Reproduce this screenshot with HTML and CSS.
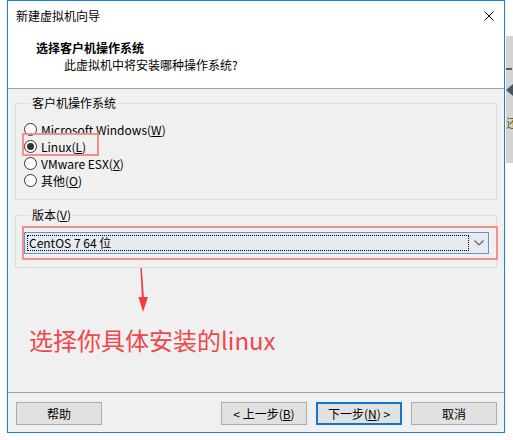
FILE: index.html
```html
<!DOCTYPE html>
<html lang="zh-CN">
<head>
<meta charset="utf-8">
<title>新建虚拟机向导</title>
<link rel="stylesheet" href="styles.css">
</head>
<body>
<div class="screen">
  <div class="gap-left"></div>
  <div class="window">
    <div class="head">
      <div class="titlebar">
        <span class="title-text">新建虚拟机向导</span>
        <svg class="close" width="10" height="10" viewBox="0 0 10 10"><path d="M0.5 0.5 L9.5 9.5 M9.5 0.5 L0.5 9.5" stroke="#000" stroke-width="1" fill="none"/></svg>
      </div>
      <div class="head-title">选择客户机操作系统</div>
      <div class="head-sub">此虚拟机中将安装哪种操作系统?</div>
    </div>
    <div class="sep"></div>
    <div class="content">
      <fieldset class="group group-os">
        <legend>客户机操作系统</legend>
        <div class="radio-row"><span class="radio"></span><span>Microsoft Windows(<u>W</u>)</span></div>
        <div class="radio-row marked"><span class="radio checked"></span><span>Linux(<u>L</u>)</span><span class="mark mark-linux"></span></div>
        <div class="radio-row"><span class="radio"></span><span>VMware ESX(<u>X</u>)</span></div>
        <div class="radio-row"><span class="radio"></span><span>其他(<u>O</u>)</span></div>
      </fieldset>
      <fieldset class="group group-ver">
        <legend>版本(<u>V</u>)</legend>
        <div class="combo">
          <div class="combo-focus">CentOS 7 64 位</div>
          <svg class="chev" width="10" height="6" viewBox="0 0 10 6"><path d="M0.5 0.5 L5 5 L9.5 0.5" stroke="#606060" stroke-width="1.2" fill="none"/></svg>
          <span class="mark mark-combo"></span>
        </div>
      </fieldset>
      <div class="arrow-wrap">
        <svg class="arrow" width="20" height="57" viewBox="0 0 20 57"><polygon points="8.4,0 9.8,0 12,31 10,31" fill="#f23c3c"/><polygon points="6.5,29 16,29 11,44" fill="#f23c3c"/></svg>
      </div>
      <div class="note">选择你具体安装的linux</div>
    </div>
    <div class="sep"></div>
    <div class="footer">
      <button class="btn">帮助</button>
      <div class="spacer"></div>
      <button class="btn">&lt; 上一步(<u>B</u>)</button>
      <button class="btn btn-default">下一步(<u>N</u>) &gt;</button>
      <button class="btn">取消</button>
    </div>
  </div>
  <div class="bg-right">
    <div class="bg-white"></div>
    <div class="bg-gray">
      <div class="bg-dash"></div>
      <div class="bg-tri"></div>
      <div class="bg-char">还</div>
    </div>
  </div>
</div>
</body>
</html>
```
FILE: styles.css
```css
* { box-sizing: border-box; }
html, body { margin: 0; padding: 0; background: #fff; }
body {
  font-family: "Noto Sans CJK SC", "Noto Sans", sans-serif;
  font-size: 12px;
  color: #000;
}
.screen { display: flex; width: 513px; height: 440px; overflow: hidden; }
.gap-left { width: 7px; flex: none; }
.window {
  width: 498px;
  height: 433px;
  flex: none;
  border: 1px solid #1a7fd6;
  background: #f0f0f0;
  display: flex;
  flex-direction: column;
}
.head { background: #fff; height: 87px; flex: none; }
.titlebar {
  height: 30px;
  display: flex;
  align-items: center;
  padding-left: 8px;
  padding-right: 10px;
}
.title-text { flex: 1; line-height: 16px; }
.close { display: block; }
.head-title {
  margin-top: 8px;
  padding-left: 28px;
  font-weight: bold;
  line-height: 17px;
}
.head-sub { padding-left: 56px; line-height: 17px; }
.sep { height: 1px; background: #a0a0a0; flex: none; }
.content { height: 303px; flex: none; display: flex; flex-direction: column; }
.group {
  margin: 6px 7px 0 7px;
  border: 1px solid #dcdcdc;
  padding: 0;
  min-width: 0;
}
.group legend {
  margin-left: 6px;
  padding: 0 2px;
  line-height: 16px;
}
.group-os { padding: 10px 0 10px 8px; }
.radio-row {
  position: relative;
  display: flex;
  align-items: center;
  height: 17px;
  line-height: 17px;
}
.radio {
  width: 13px;
  height: 13px;
  border: 1px solid #333;
  border-radius: 50%;
  background: #fff;
  margin-right: 4px;
  flex: none;
  display: flex;
  align-items: center;
  justify-content: center;
}
.radio.checked::after {
  content: "";
  width: 7px;
  height: 7px;
  border-radius: 50%;
  background: #333;
}
.mark { position: absolute; border: 2px solid #f29090; pointer-events: none; }
.mark-linux { left: -2px; top: -5px; width: 77px; height: 23px; }
.group-ver { margin-top: 7px; padding: 9px 7px 13px 8px; }
.combo {
  position: relative;
  height: 22px;
  border: 1px solid #5e97d2;
  background: #e5eaf3;
  display: flex;
  align-items: center;
  padding-left: 2px;
}
.combo-focus {
  width: 442px;
  height: 16px;
  border: 1px dotted #000;
  line-height: 14px;
  padding-left: 1px;
}
.chev { margin-left: 5px; display: block; }
.mark-combo { left: -3px; top: -7px; width: 476px; height: 34px; }
.arrow-wrap { height: 57px; padding-left: 124px; }
.arrow { display: block; }
.note {
  margin-left: 21px;
  font-size: 24px;
  line-height: 30px;
  color: #f2474a;
}
.footer {
  flex: 1;
  display: flex;
  align-items: flex-start;
  padding: 9px 7px 0 8px;
  gap: 9px;
}
.spacer { flex: 1; }
.btn {
  width: 86px;
  height: 23px;
  border: 1px solid #adadad;
  background: #e1e1e1;
  font-family: inherit;
  font-size: 12px;
  color: #000;
  padding: 0;
  line-height: 19px;
}
.btn-default { border: 2px solid #0a78d4; }
.bg-right { flex: 1; display: flex; flex-direction: column; }
.bg-white { height: 36px; margin-left: 1px; }
.bg-gray {
  height: 127px;
  margin-left: 1px;
  background: #d4d4d4;
  position: relative;
  overflow: hidden;
}
.bg-dash { margin-top: 32px; width: 6px; height: 2px; background: #555e66; }
.bg-tri {
  margin-top: 14px;
  width: 0;
  height: 0;
  border-top: 6px solid transparent;
  border-bottom: 6px solid transparent;
  border-right: 7px solid #4a5560;
}
.bg-char { margin-top: 20px; font-size: 12px; line-height: 14px; color: #7a5a10; }
```
